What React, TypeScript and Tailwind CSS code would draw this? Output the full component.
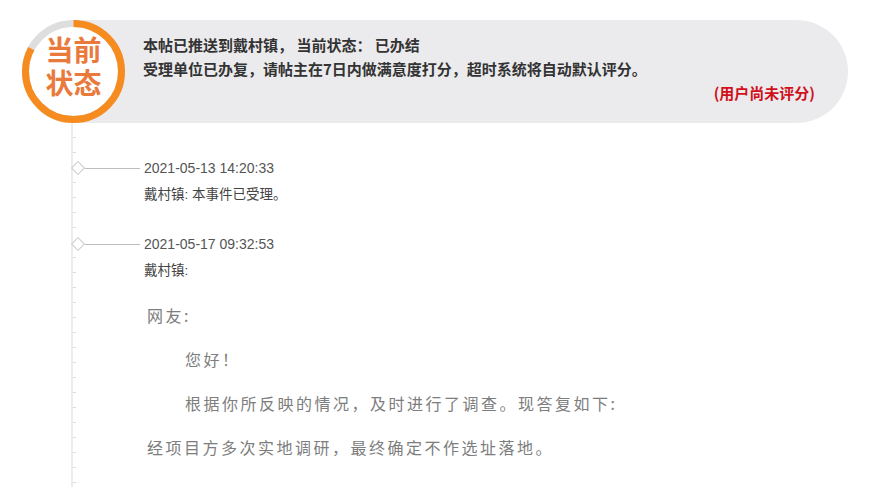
const ticks = Array.from({ length: 24 }, (_, i) => i);

function StatusBadge() {
  // orange ring with a small grey gap at the top-left
  const r = 48;
  const c = 2 * Math.PI * r;
  const orange = (298 / 360) * c;
  return (
    <div className="absolute left-[22px] top-[20px] w-[103px] h-[103px]">
      <svg width="103" height="103" viewBox="0 0 103 103" className="absolute inset-0">
        <circle cx="51.5" cy="51.5" r={r} fill="#ffffff" stroke="#dedede" strokeWidth="7" />
        <circle
          cx="51.5"
          cy="51.5"
          r={r}
          fill="none"
          stroke="#f68b1f"
          strokeWidth="7"
          strokeDasharray={`${orange} ${c}`}
          transform="rotate(-90 51.5 51.5)"
        />
      </svg>
      <div className="relative flex h-full flex-col items-center justify-center gap-[1px] pb-[6px] text-[28px] font-bold leading-[32px] text-[#ea7a3c] [font-family:'Liberation_Sans','Noto_Sans_CJK_SC',sans-serif]">
        <span>当前</span>
        <span>状态</span>
      </div>
    </div>
  );
}

function Entry({ date, text, gap }: { date: string; text: string; gap: string }) {
  return (
    <div className={gap}>
      <div className="flex h-[20px] items-center">
        <span className="relative ml-[2px] h-[10px] w-[10px] rotate-45 border border-[#c9c9c9] bg-white" />
        <span className="ml-[2px] h-px w-[55px] bg-[#bdbdbd]" />
        <span className="ml-[4px] text-[14px] text-[#555] [font-family:'Liberation_Sans',sans-serif]">
          {date}
        </span>
      </div>
      <p className="mt-[7px] flex h-[20px] items-center pl-[73px] text-[13.5px] text-[#444] [font-family:'Liberation_Sans','Noto_Sans_CJK_SC',sans-serif]">
        {text}
      </p>
    </div>
  );
}

export default function App() {
  return (
    <div className="relative h-[487px] w-[873px] overflow-hidden bg-white">
      <div className="relative pt-[20px]">
        <div className="ml-[73px] flex h-[103px] w-[775px] flex-col rounded-r-[52px] bg-[#ebebed] pl-[70px] pr-[33px] pt-[13px] text-[15px] font-bold leading-[24px] text-[#333] [font-family:'Noto_Sans_CJK_SC',sans-serif]">
          <p>本帖已推送到戴村镇， 当前状态： 已办结</p>
          <p>受理单位已办复，请帖主在7日内做满意度打分，超时系统将自动默认评分。</p>
          <p className="text-right text-[#d0101b]">(用户尚未评分)</p>
        </div>
        <StatusBadge />
      </div>

      <div className="relative h-[364px] pl-[71px]">
        <div className="absolute left-[71px] top-0 bottom-0 w-[2px] bg-[#ececec]" />
        <div className="absolute left-[73px] top-[14px] flex flex-col gap-[14px]">
          {ticks.map((t) => (
            <span key={t} className="h-px w-[3px] bg-[#dcdcdc]" />
          ))}
        </div>

        <Entry gap="pt-[35px]" date="2021-05-13 14:20:33" text="戴村镇: 本事件已受理。" />
        <Entry gap="mt-[29px]" date="2021-05-17 09:32:53" text="戴村镇:" />

        <div className="mt-[12px] pl-[76px] text-[16px] leading-[44px] tracking-[2.5px] text-[#7d7d7d] [font-family:'Noto_Sans_CJK_SC',sans-serif]">
          <p>网友:</p>
          <p className="pl-[38px]">您好！</p>
          <p className="pl-[38px]">根据你所反映的情况，及时进行了调查。现答复如下:</p>
          <p>经项目方多次实地调研，最终确定不作选址落地。</p>
        </div>
      </div>
    </div>
  );
}
